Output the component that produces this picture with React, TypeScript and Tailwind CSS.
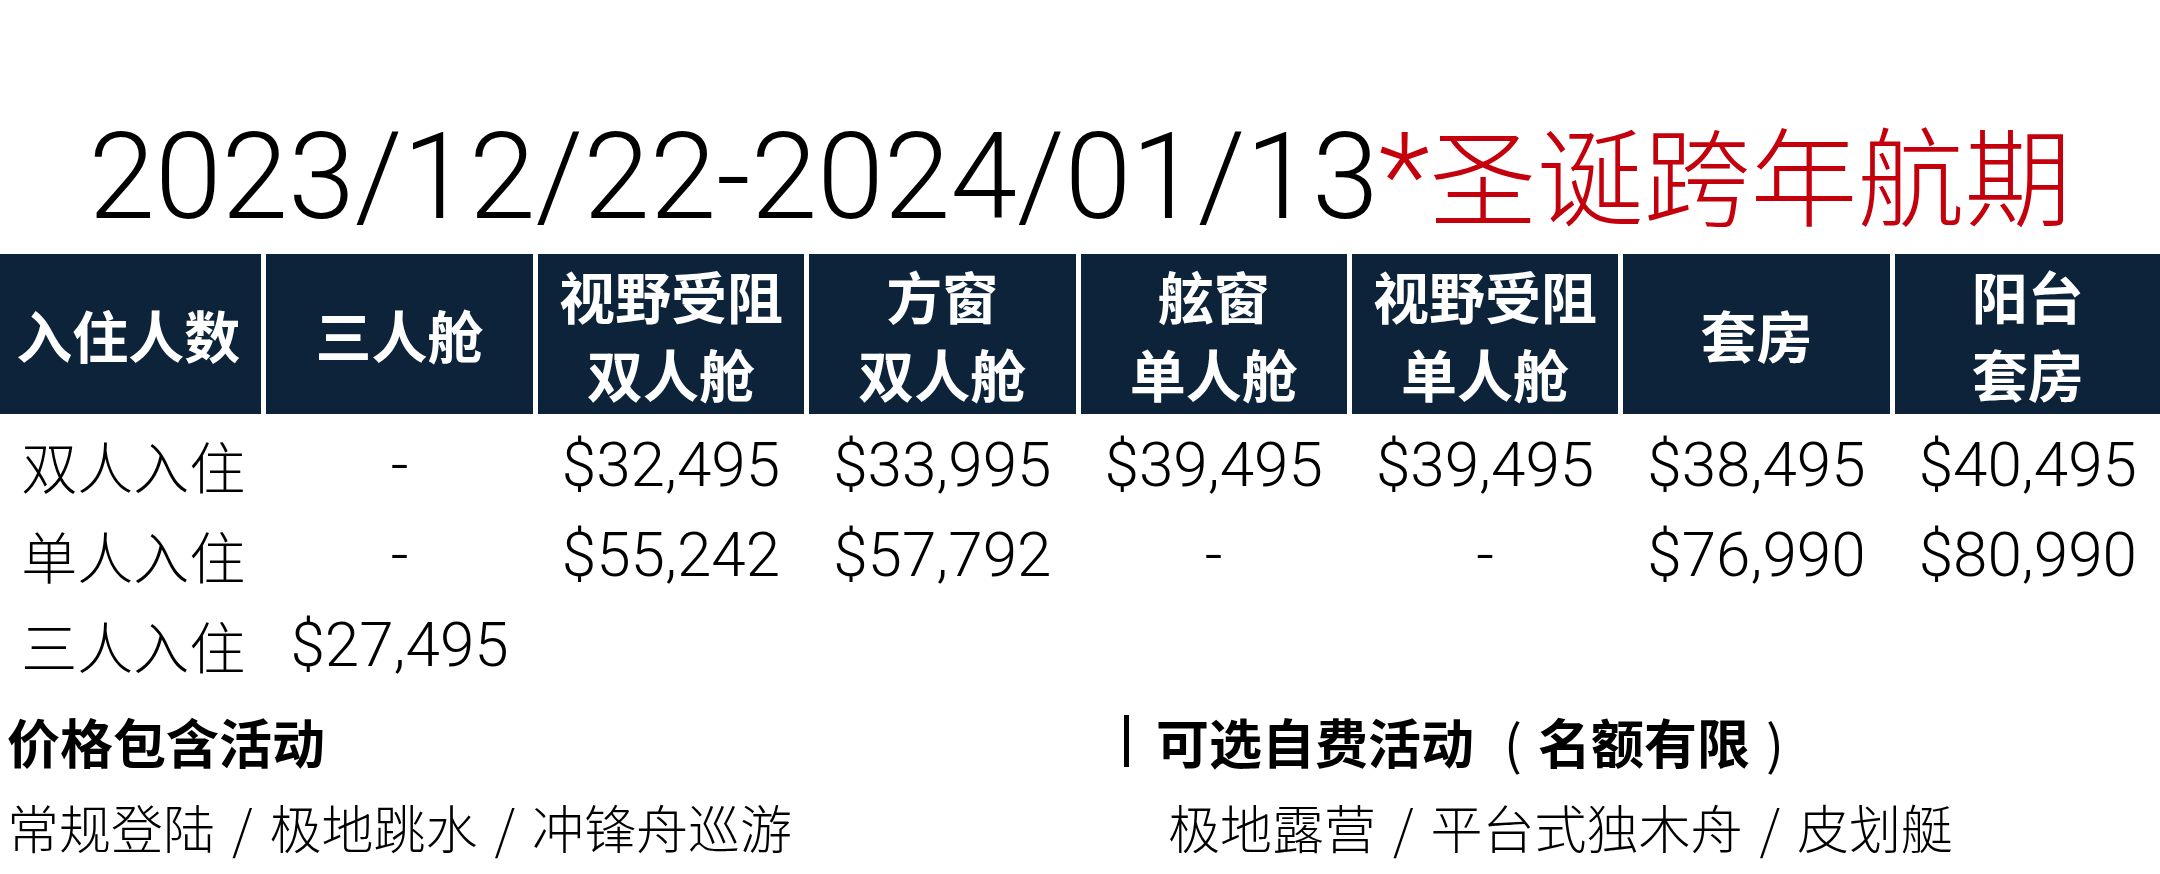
import React from "react";

const CJK = "font-['Noto_Sans_CJK_SC','Noto_Sans',sans-serif]";
const LAT = "font-['Roboto','Liberation_Sans','Noto_Sans_CJK_SC',sans-serif]";

const headers: string[][] = [
  ["入住人数"],
  ["三人舱"],
  ["视野受阻", "双人舱"],
  ["方窗", "双人舱"],
  ["舷窗", "单人舱"],
  ["视野受阻", "单人舱"],
  ["套房"],
  ["阳台", "套房"],
];

const rows: string[][] = [
  ["双人入住", "-", "$32,495", "$33,995", "$39,495", "$39,495", "$38,495", "$40,495"],
  ["单人入住", "-", "$55,242", "$57,792", "-", "-", "$76,990", "$80,990"],
  ["三人入住", "$27,495", "", "", "", "", "", ""],
];

function Sep() {
  return <span className="mx-[17px]">/</span>;
}

export default function App() {
  return (
    <div className="w-[2160px] h-[874px] overflow-hidden bg-white text-black">
      {/* Title */}
      <div className="h-[254px] flex items-end justify-center pb-[17px]">
        <div className="whitespace-nowrap leading-none">
          <span className={`${LAT} text-[120px] font-light`}>2023/12/22-2024/01/13</span>
          <span className={`${LAT} text-[120px] font-light text-[#c3000c]`}>*</span>
          <span className={`${CJK} text-[107px] text-[#c3000c] font-light`}>圣诞跨年航期</span>
        </div>
      </div>

      {/* Header */}
      <div className="ml-[-5px] w-[2166px] grid grid-cols-8 gap-x-[5px] h-[160px]">
        {headers.map((lines, i) => (
          <div
            key={i}
            className={`bg-[#0c233a] flex flex-col items-center justify-center text-white font-bold text-[56px] leading-[78px] ${CJK}`}
          >
            {lines.map((l, j) => (
              <div key={j}>{l}</div>
            ))}
          </div>
        ))}
      </div>

      {/* Body */}
      <div className="pt-[4px]">
        {rows.map((r, ri) => (
          <div key={ri} className="ml-[-5px] w-[2166px] grid grid-cols-8 gap-x-[5px] h-[90px]">
            {r.map((c, ci) => (
              <div key={ci} className={`flex items-center justify-center ${ci === 0 ? "pl-[10px]" : ""}`}>
                {ci === 0 ? (
                  <span className={`${CJK} text-[56px] font-light`}>{c}</span>
                ) : (
                  <span className={`${LAT} text-[62px] font-light`}>{c}</span>
                )}
              </div>
            ))}
          </div>
        ))}
      </div>

      {/* Activities */}
      <div className={`grid grid-cols-2 pt-[10px] ${CJK}`}>
        <div className="pl-[7px]">
          <div className="text-[53px] font-bold leading-[86px]">价格包含活动</div>
          <div className="text-[52px] font-light leading-[86px]">
            常规登陆<Sep />极地跳水<Sep />冲锋舟巡游
          </div>
        </div>
        <div className="pl-[44px]">
          <div className="text-[53px] font-bold leading-[86px] flex items-center">
            <span className="inline-block w-[5px] h-[52px] bg-black mr-[27px]"></span>
            <span>可选自费活动</span>
            <span className="font-normal ml-[30px] mr-[16px]">(</span>
            <span>名额有限</span>
            <span className="font-normal ml-[16px]">)</span>
          </div>
          <div className="text-[52px] font-light leading-[86px] pl-[44px]">
            极地露营<Sep />平台式独木舟<Sep />皮划艇
          </div>
        </div>
      </div>
    </div>
  );
}
